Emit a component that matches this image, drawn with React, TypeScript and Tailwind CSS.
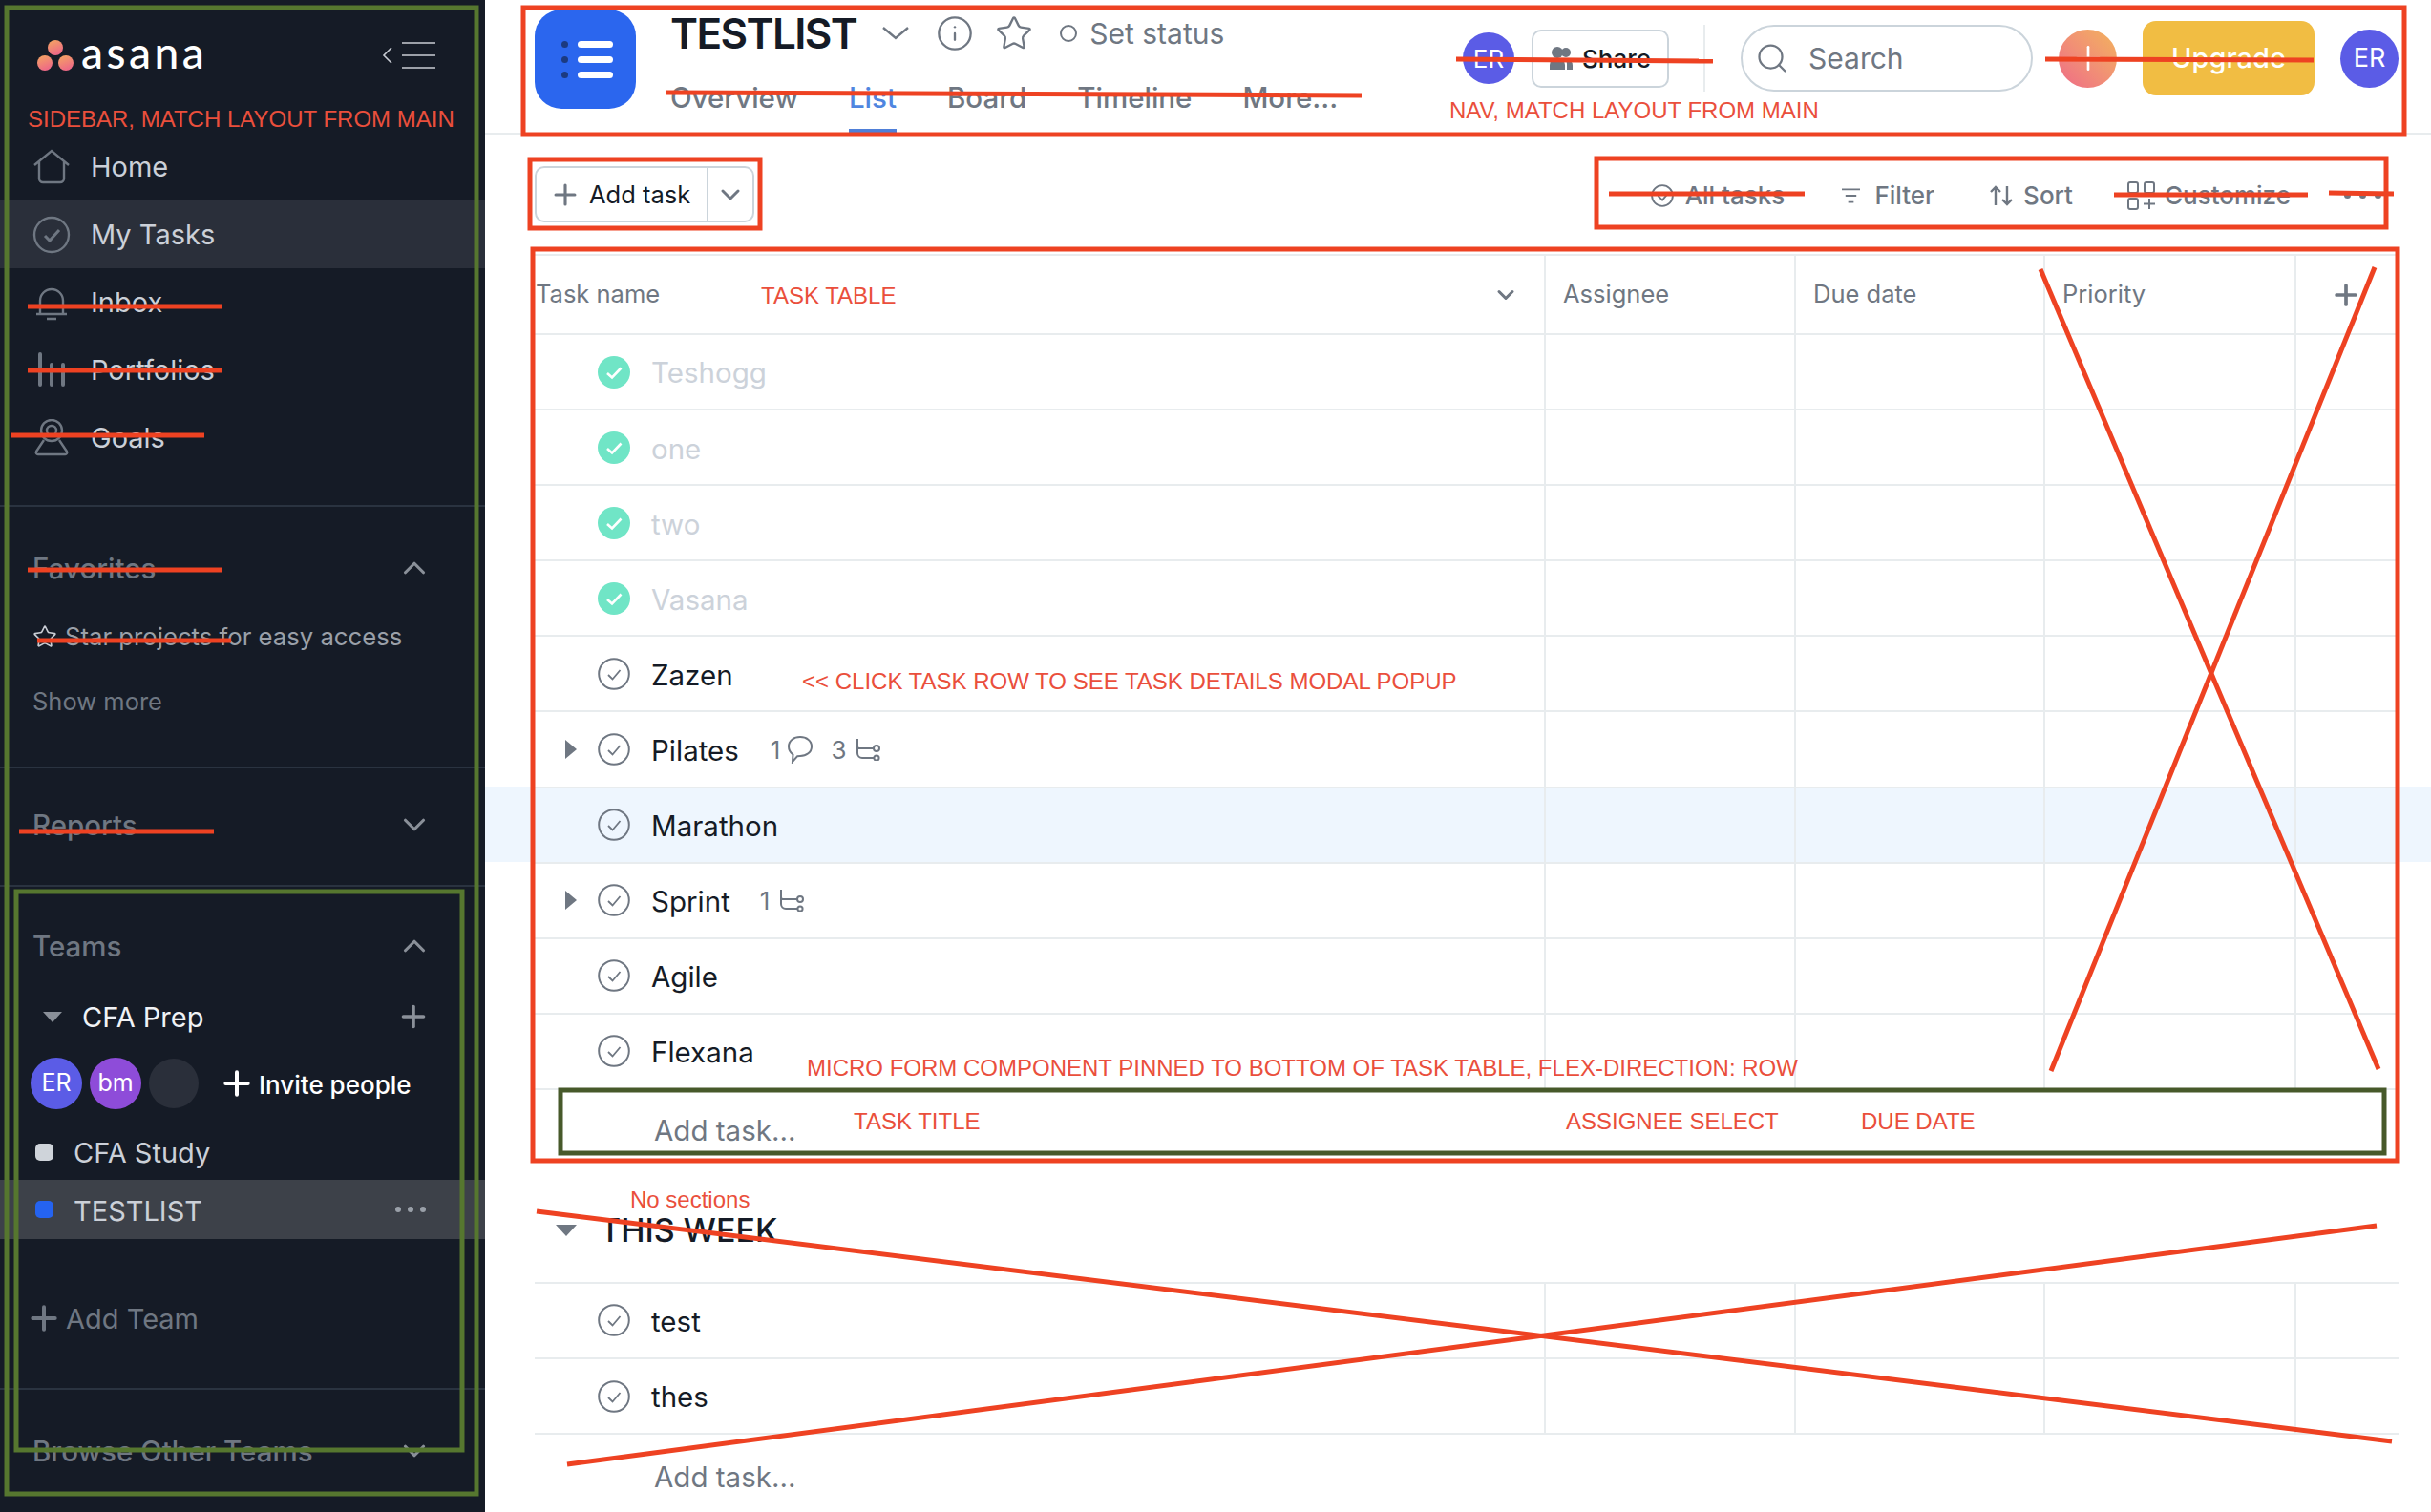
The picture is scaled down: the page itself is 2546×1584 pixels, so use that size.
import React from "react";
import { ChevronDown, ChevronUp, Plus, Search, Star, Info } from "lucide-react";

type Task = {
  name: string;
  done?: boolean;
  arrow?: boolean;
  hover?: boolean;
  comments?: number;
  subtasks?: number;
};

const mainTasks: Task[] = [
  { name: "Teshogg", done: true },
  { name: "one", done: true },
  { name: "two", done: true },
  { name: "Vasana", done: true },
  { name: "Zazen" },
  { name: "Pilates", arrow: true, comments: 1, subtasks: 3 },
  { name: "Marathon", hover: true },
  { name: "Sprint", arrow: true, subtasks: 1 },
  { name: "Agile" },
  { name: "Flexana" },
];

const weekTasks: Task[] = [{ name: "test" }, { name: "thes" }];

// red and green marks someone scribbled on top of the screenshot
const strikes = [
  [29, 321, 232, 321],
  [29, 388, 232, 388],
  [11, 456, 214, 456],
  [29, 597, 232, 597],
  [39, 671, 242, 671],
  [20, 871, 224, 871],
  [698, 97, 1426, 100],
  [1525, 62, 1794, 64],
  [2142, 62, 2423, 63],
  [1685, 203, 1890, 203],
  [2214, 204, 2417, 204],
  [2439, 202, 2507, 203],
  [2137, 282, 2491, 1120],
  [2487, 280, 2148, 1122],
  [562, 1269, 2505, 1510],
  [594, 1534, 2489, 1284],
];

const redBoxes = [
  [548, 8, 1970, 133],
  [555, 167, 241, 72],
  [1672, 166, 827, 72],
  [558, 261, 1953, 955],
];

const CheckCircle = ({ done }: { done?: boolean }) =>
  done ? (
    <svg width="34" height="34" viewBox="0 0 34 34" className="shrink-0">
      <circle cx="17" cy="17" r="17" fill="#70e5c6" />
      <path d="M10 18l5 4.5 9.5-10" fill="none" stroke="#fff" strokeWidth="2.6" />
    </svg>
  ) : (
    <svg width="34" height="34" viewBox="0 0 34 34" className="shrink-0">
      <circle cx="17" cy="17" r="15.8" fill="none" stroke="#6f7782" strokeWidth="2" />
      <path d="M11 18l4.5 4.5 8-9.5" fill="none" stroke="#6f7782" strokeWidth="1.8" />
    </svg>
  );

const SubtaskIcon = () => (
  <svg width="26" height="24" viewBox="0 0 26 24" fill="none" stroke="#6f7782" strokeWidth="2">
    <path d="M2 1v15a5 5 0 0 0 5 5h12M2 9a2 2 0 0 0 2 2h15" />
    <circle cx="22" cy="11" r="3" />
    <circle cx="22" cy="21" r="2.6" />
  </svg>
);

const CommentIcon = () => (
  <svg width="26" height="30" viewBox="0 0 26 30" fill="none" stroke="#6f7782" strokeWidth="2">
    <path d="M13 2c6.500 0 12 3.800 12 10s-5.500 10-12 10c-1 0-2 0-3 .3L5 28l.5-7.500C2.800 18.500 1 15.500 1 12 1 5.800 6.500 2 13 2z" />
  </svg>
);

const TaskRow = ({ task }: { task: Task }) => (
  <div className={task.hover ? "pl-[52px] pr-[34px] bg-[#eef6fe]" : "pl-[52px] pr-[34px]"}>
    <div className="grid grid-cols-[1057px_262px_261px_263px_109px] h-[79.1px] border-t-2 border-[#e8ecee]">
      <div className="flex items-center pl-[32px]">
        <div className="w-[34px] shrink-0">
          {task.arrow && (
            <div className="w-0 h-0 border-y-[10px] border-y-transparent border-l-[12px] border-l-[#6f7782]" />
          )}
        </div>
        <CheckCircle done={task.done} />
        <span className={task.done ? "ml-[22px] pt-[2px] text-[29.5px] text-[#ccd2da]" : "ml-[22px] pt-[2px] text-[29.5px] text-[#151b26]"}>
          {task.name}
        </span>
        {task.comments && (
          <span className="ml-[33px] flex items-center gap-[8px] text-[26px] text-[#6f7782]">
            {task.comments}
            <CommentIcon />
          </span>
        )}
        {task.subtasks && (
          <span className={task.comments ? "ml-[19px] flex items-center gap-[10px] text-[26px] text-[#6f7782]" : "ml-[31px] flex items-center gap-[10px] text-[26px] text-[#6f7782]"}>
            {task.subtasks}
            <SubtaskIcon />
          </span>
        )}
      </div>
      <div className="border-l-2 border-[#e8ecee]" />
      <div className="border-l-2 border-[#e8ecee]" />
      <div className="border-l-2 border-[#e8ecee]" />
      <div className="border-l-2 border-[#e8ecee]" />
    </div>
  </div>
);

const NavItem = ({ label, active, icon }: { label: string; active?: boolean; icon: React.ReactNode }) => (
  <div className={active ? "h-[71px] pl-[34px] flex items-center gap-[21px] bg-[#2a2f3a]" : "h-[71px] pl-[34px] flex items-center gap-[21px]"}>
    <svg width="40" height="40" viewBox="0 0 40 40" fill="none" stroke="#6f7782" strokeWidth="2.4" className="shrink-0">
      {icon}
    </svg>
    <span className="text-[29px] text-[#cbd0d8]">{label}</span>
  </div>
);

const SectionHead = ({ label, open }: { label: string; open?: boolean }) => (
  <div className="h-[40px] pl-[34px] pr-[55px] flex items-center justify-between">
    <span className="text-[29.5px] font-medium text-[#6f7782] whitespace-nowrap">{label}</span>
    {open ? (
      <ChevronUp size={38} strokeWidth={2} className="text-[#8a9099]" />
    ) : (
      <ChevronDown size={38} strokeWidth={2} className="text-[#8a9099]" />
    )}
  </div>
);

const Sidebar = () => (
  <aside className="w-[508px] shrink-0 h-full bg-[#151b26] flex flex-col">
    <div className="h-[116px] mb-[23px] pl-[39px] pr-[52px] flex items-center justify-between">
      <div className="flex items-center gap-[8px]">
        <svg width="38" height="34" viewBox="0 0 38 34">
          <defs>
            <linearGradient id="dot" x1="0" y1="0" x2="0.4" y2="1">
              <stop offset="0" stopColor="#f5a860" />
              <stop offset="1" stopColor="#ee6a86" />
            </linearGradient>
          </defs>
          <circle cx="19" cy="9" r="8" fill="url(#dot)" />
          <circle cx="8" cy="25" r="8" fill="url(#dot)" />
          <circle cx="30" cy="25" r="8" fill="url(#dot)" />
        </svg>
        <span className="text-[46px] leading-none font-medium tracking-[3.500px] text-white [font-family:Lato,sans-serif] -mt-[6px]">asana</span>
      </div>
      <svg width="56" height="28" viewBox="0 0 56 28" fill="none" stroke="#c9cdd4" strokeWidth="1.6">
        <path d="M10 6l-8 8 8 8" />
        <path d="M21 1h35M21 14h35M21 27h35" />
      </svg>
    </div>

    <div className="h-[392px] shrink-0 border-b-2 border-[#2a3340]">
      <NavItem label="Home" icon={<path d="M2 18L20 3l18 15M7 14v18a4 4 0 0 0 4 4h18a4 4 0 0 0 4-4V14" />} />
      <NavItem label="My Tasks" active icon={<><circle cx="20" cy="20" r="18" /><path d="M13 21l5 5 10-11" strokeWidth="3" /></>} />
      <NavItem label="Inbox" icon={<path d="M4 32h32M8 32V18a12 12 0 0 1 24 0v14M15 37h10" />} />
      <NavItem label="Portfolios" icon={<path d="M8 3v32M20 14v21M32 14v21" strokeWidth="4" strokeLinecap="round" />} />
      <NavItem label="Goals" icon={<><circle cx="20" cy="12" r="11" /><circle cx="20" cy="12" r="5" /><path d="M12 22L4 34a2 2 0 0 0 2 3h28a2 2 0 0 0 2-3l-8-12" /></>} />
    </div>

    <div className="h-[274px] shrink-0 pt-[44px] border-b-2 border-[#2a3340]">
      <SectionHead label="Favorites" open />
      <div className="mt-[32px] h-[40px] pl-[34px] flex items-center gap-[8px] text-[#9aa0a9] text-[25.700px] whitespace-nowrap">
        <Star size={26} strokeWidth={1.5} className="text-[#c9cdd4] shrink-0" />
        Star projects for easy access
      </div>
      <div className="mt-[28px] h-[40px] pl-[34px] flex items-center text-[25.500px] text-[#6f7782]">Show more</div>
    </div>

    <div className="h-[124px] shrink-0 pt-[39px] border-b-2 border-[#2a3340]">
      <SectionHead label="Reports" />
    </div>

    <div className="h-[527px] shrink-0 pt-[42px] border-b-2 border-[#2a3340]">
      <SectionHead label="Teams" open />
      <div className="mt-[34px] h-[40px] pl-[45px] pr-[57px] flex items-center">
        <div className="w-0 h-0 border-x-[10px] border-x-transparent border-t-[11px] border-t-[#8a9099]" />
        <span className="ml-[21px] pt-[2px] text-[29px] text-[#f0f2f5]">CFA Prep</span>
        <Plus size={36} strokeWidth={2.4} className="ml-auto text-[#8a9099]" />
      </div>
      <div className="mt-[23px] h-[54px] pl-[32px] flex items-center gap-[8px]">
        <div className="w-[54px] h-[54px] rounded-full bg-[#5b5ce6] flex items-center justify-center text-[25px] text-white">ER</div>
        <div className="w-[54px] h-[54px] rounded-full bg-[#8e4cd9] flex items-center justify-center text-[25px] text-white">bm</div>
        <div className="w-[52px] h-[52px] rounded-full bg-[#2a2f3a]" />
        <Plus size={40} strokeWidth={2.4} className="ml-[12px] text-white" />
        <span className="-ml-[5px] pt-[2px] text-[26px] font-medium text-white">Invite people</span>
      </div>
      <div className="mt-[25px] h-[40px] pl-[37px] flex items-center gap-[21px]">
        <div className="w-[19px] h-[18px] rounded-[5px] bg-[#cfd4da]" />
        <span className="pt-[2px] text-[29px] text-[#cbd0d8]">CFA Study</span>
      </div>
      <div className="mt-[9px] h-[62px] pl-[37px] pr-[62px] flex items-center gap-[21px] bg-[#3d4149]">
        <div className="w-[19px] h-[18px] rounded-[5px] bg-[#2563f0]" />
        <span className="pt-[3px] text-[29px] text-[#cbd0d8]">TESTLIST</span>
        <div className="ml-auto flex gap-[7px]">
          <div className="w-[6px] h-[6px] rounded-full bg-[#9aa0a9]" />
          <div className="w-[6px] h-[6px] rounded-full bg-[#9aa0a9]" />
          <div className="w-[6px] h-[6px] rounded-full bg-[#9aa0a9]" />
        </div>
      </div>
      <div className="mt-[63px] h-[40px] pl-[26px] flex items-center gap-[3px] text-[29px] text-[#6f7782]">
        <Plus size={40} strokeWidth={2.4} />
        <span className="pt-[2px]">Add Team</span>
      </div>
    </div>

    <div className="pt-[44px]">
      <SectionHead label="Browse Other Teams" />
    </div>
  </aside>
);

const Header = () => (
  <header className="h-[141px] shrink-0 pl-[52px] pr-[34px] flex items-start border-b-2 border-[#e8ecee]">
    <div className="mt-[10px] w-[106px] h-[104px] rounded-[28px] bg-[#2b66ee] flex flex-col justify-center gap-[9px] pl-[28px]">
      {[0, 1, 2].map((i) => (
        <div key={i} className="flex items-center gap-[10px]">
          <div className="w-[7px] h-[7px] rounded-full bg-[#1c3a80]" />
          <div className="w-[37px] h-[7px] rounded-full bg-white" />
        </div>
      ))}
    </div>
    <div className="ml-[36px]">
      <div className="mt-[2px] h-[66px] flex items-center">
        <h1 className="text-[44px] font-semibold leading-none tracking-[-1.6px] text-[#151b26]">TESTLIST</h1>
        <svg width="28" height="14" viewBox="0 0 28 14" fill="none" stroke="#6f7782" strokeWidth="2.400" className="ml-[27px]">
          <path d="M1 1l13 11 13-11" />
        </svg>
        <Info size={40} strokeWidth={1.4} className="ml-[28px] text-[#6f7782]" />
        <Star size={40} strokeWidth={1.4} className="ml-[22px] text-[#6f7782]" />
        <div className="ml-[28px] w-[18px] h-[18px] rounded-full border-2 border-[#6f7782]" />
        <span className="ml-[13px] text-[30px] text-[#6f7782]">Set status</span>
      </div>
      <div className="flex gap-[53px]">
        <span className="h-[73px] pt-[14px] text-[29.5px] leading-[40px] font-medium text-[#6f7782]">Overview</span>
        <span className="h-[73px] pt-[14px] text-[29.5px] leading-[40px] font-medium text-[#4f86e0] border-b-[6px] border-[#4f7fd8]">List</span>
        <span className="h-[73px] pt-[14px] text-[29.5px] leading-[40px] font-medium text-[#6f7782]">Board</span>
        <span className="h-[73px] pt-[14px] text-[29.5px] leading-[40px] font-medium text-[#6f7782]">Timeline</span>
        <span className="h-[73px] pt-[14px] text-[29.5px] leading-[40px] font-medium text-[#6f7782]">More...</span>
      </div>
    </div>
    <div className="ml-auto h-[122px] flex items-center">
      <div className="w-[54px] h-[54px] rounded-full bg-[#5b5ce6] flex items-center justify-center text-[26px] text-white">ER</div>
      <button className="ml-[18px] w-[144px] h-[61px] rounded-[10px] border-2 border-[#cbd4db] flex items-center justify-center gap-[10px] text-[26px] font-medium text-[#151b26]">
        <svg width="24" height="26" viewBox="0 0 24 26" fill="#6f7782">
          <circle cx="8" cy="7" r="6" />
          <circle cx="17" cy="7" r="5" />
          <path d="M0 25v-5a7 7 0 0 1 7-7h2a7 7 0 0 1 7 7v5zM18 25v-6a8 8 0 0 0-2-5.500h1a7 7 0 0 1 7 7V25z" />
        </svg>
        Share
      </button>
      <div className="ml-[36px] w-[2px] h-[70px] bg-[#e8ecee]" />
      <div className="ml-[37px] w-[306px] h-[70px] rounded-full border-2 border-[#cbd4db] flex items-center pl-[13px] gap-[20px] text-[30px] text-[#6f7782]">
        <Search size={36} strokeWidth={1.5} />
        Search
      </div>
      <div className="ml-[27px] w-[61px] h-[61px] rounded-full bg-gradient-to-bl from-[#f2b35a] to-[#ee6a86] flex items-center justify-center">
        <Plus size={40} strokeWidth={1.6} className="text-white" />
      </div>
      <button className="ml-[27px] w-[180px] h-[78px] rounded-[14px] bg-[#f1bd43] text-[29px] font-medium text-white">Upgrade</button>
      <div className="ml-[27px] w-[61px] h-[61px] rounded-full bg-[#5b5ce6] flex items-center justify-center text-[27px] text-white">ER</div>
    </div>
  </header>
);

const Toolbar = () => (
  <div className="h-[125px] shrink-0 pl-[52px] pr-[52px] flex items-center justify-between">
    <div className="w-[230px] h-[59px] rounded-[10px] border-2 border-[#cbd4db] flex items-center">
      <Plus size={34} strokeWidth={2.2} className="ml-[13px] text-[#6f7782]" />
      <span className="ml-[8px] pt-[2px] text-[25.500px] text-[#151b26]">Add task</span>
      <div className="ml-auto w-[48px] h-full border-l-2 border-[#cbd4db] flex items-center justify-center">
        <ChevronDown size={32} strokeWidth={2.2} className="text-[#6f7782]" />
      </div>
    </div>
    <div className="flex items-center text-[26px] font-medium text-[#6f7782] pt-[2px]">
      <svg width="24" height="26" viewBox="0 0 26 26" fill="none" stroke="#6f7782" strokeWidth="2">
        <circle cx="13" cy="13" r="11.800" />
        <path d="M8 13l5 5 5-6" />
      </svg>
      <span className="ml-[12px]">All tasks</span>
      <svg width="19" height="20" viewBox="0 0 20 20" fill="#6f7782" className="ml-[60px]">
        <path d="M0 2h20v2H0zM4 9h12v2H4zM7 16h6v2H7z" />
      </svg>
      <span className="ml-[15px]">Filter</span>
      <svg width="24" height="24" viewBox="0 0 24 24" fill="none" stroke="#6f7782" strokeWidth="2.400" className="ml-[58px]">
        <path d="M6 22V3M1 8l5-5 5 5M18 2v19M13 16l5 5 5-5" />
      </svg>
      <span className="ml-[11px]">Sort</span>
      <svg width="30" height="30" viewBox="0 0 30 30" fill="none" stroke="#6f7782" strokeWidth="2" className="ml-[57px]">
        <rect x="1" y="1" width="10" height="11" rx="2" />
        <rect x="18" y="1" width="10" height="11" rx="2" />
        <rect x="1" y="18" width="10" height="11" rx="2" />
        <path d="M23 18v11M17 23.500h12" />
      </svg>
      <span className="ml-[9px]">Customize</span>
      <div className="ml-[56px] flex gap-[9px]">
        <div className="w-[7px] h-[7px] rounded-full bg-[#6f7782]" />
        <div className="w-[7px] h-[7px] rounded-full bg-[#6f7782]" />
        <div className="w-[7px] h-[7px] rounded-full bg-[#6f7782]" />
      </div>
    </div>
  </div>
);

const TableHead = () => (
  <div className="pl-[52px] pr-[34px]">
    <div className="grid grid-cols-[1057px_262px_261px_263px_109px] h-[83px] border-t-2 border-[#e8ecee] text-[25.500px] text-[#6f7782]">
      <div className="flex items-center pl-[1px] pr-[26px] justify-between">
        Task name
        <ChevronDown size={28} strokeWidth={2.6} />
      </div>
      <div className="flex items-center pl-[18px] border-l-2 border-[#e8ecee]">Assignee</div>
      <div className="flex items-center pl-[18px] border-l-2 border-[#e8ecee]">Due date</div>
      <div className="flex items-center pl-[18px] border-l-2 border-[#e8ecee]">Priority</div>
      <div className="flex items-center pl-[35px] border-l-2 border-[#e8ecee]">
        <Plus size={34} strokeWidth={2.6} />
      </div>
    </div>
  </div>
);

const AddRow = ({ className }: { className: string }) => (
  <div className="pl-[52px] pr-[34px]">
    <div className={className}>Add task...</div>
  </div>
);

const Annotation = ({ className, children }: { className: string; children: React.ReactNode }) => (
  <span className={"absolute -translate-y-1/2 leading-none whitespace-nowrap text-[24px] text-[#ea4f3c] [font-family:'Liberation_Sans',sans-serif] " + className}>
    {children}
  </span>
);

const Annotations = () => (
  <>
    <svg width="2546" height="1584" viewBox="0 0 2546 1584" fill="none" className="absolute inset-0 pointer-events-none">
      {strikes.map(([x1, y1, x2, y2], i) => (
        <line key={i} x1={x1} y1={y1} x2={x2} y2={y2} stroke="#ee4222" strokeWidth="5" />
      ))}
      {redBoxes.map(([x, y, w, h], i) => (
        <rect key={i} x={x} y={y} width={w} height={h} stroke="#ee4222" strokeWidth="5" />
      ))}
      <rect x="587" y="1142" width="1910" height="66" stroke="#47592a" strokeWidth="5" />
      <rect x="7" y="8" width="492" height="1557" stroke="#56772f" strokeWidth="5" />
      <rect x="17" y="934" width="467" height="585" stroke="#56772f" strokeWidth="5" />
    </svg>
    <Annotation className="left-[29px] top-[125px]">SIDEBAR, MATCH LAYOUT FROM MAIN</Annotation>
    <Annotation className="left-[1518px] top-[116px]">NAV, MATCH LAYOUT FROM MAIN</Annotation>
    <Annotation className="left-[797px] top-[310px]">TASK TABLE</Annotation>
    <Annotation className="left-[840px] top-[714px]">{"<< CLICK TASK ROW TO SEE TASK DETAILS MODAL POPUP"}</Annotation>
    <Annotation className="left-[845px] top-[1119px]">MICRO FORM COMPONENT PINNED TO BOTTOM OF TASK TABLE, FLEX-DIRECTION: ROW</Annotation>
    <Annotation className="left-[894px] top-[1175px]">TASK TITLE</Annotation>
    <Annotation className="left-[1640px] top-[1175px]">ASSIGNEE SELECT</Annotation>
    <Annotation className="left-[1949px] top-[1175px]">DUE DATE</Annotation>
    <Annotation className="left-[660px] top-[1257px]">No sections</Annotation>
  </>
);

export default function App() {
  return (
    <div className="relative flex w-[2546px] h-[1584px] overflow-hidden bg-white [font-family:Inter,sans-serif]">
      <Sidebar />
      <main className="flex-1 min-w-0 flex flex-col">
        <Header />
        <Toolbar />
        <TableHead />
        {mainTasks.map((task) => (
          <TaskRow key={task.name} task={task} />
        ))}
        <AddRow className="h-[86px] pl-[125px] flex items-center border-t-2 border-[#e8ecee] text-[29.5px] text-[#6f7782]" />
        <div className="pl-[52px] pr-[34px]">
          <div className="h-[117px] pl-[22px] flex items-center gap-[24px] pt-[9px]">
            <div className="w-0 h-0 border-x-[11px] border-x-transparent border-t-[12px] border-t-[#6f7782]" />
            <span className="text-[34px] font-medium text-[#151b26]">THIS WEEK</span>
          </div>
        </div>
        {weekTasks.map((task) => (
          <TaskRow key={task.name} task={task} />
        ))}
        <AddRow className="h-[83px] pt-[6px] pl-[125px] flex items-center border-t-2 border-[#e8ecee] text-[29.5px] text-[#6f7782]" />
      </main>
      <Annotations />
    </div>
  );
}
